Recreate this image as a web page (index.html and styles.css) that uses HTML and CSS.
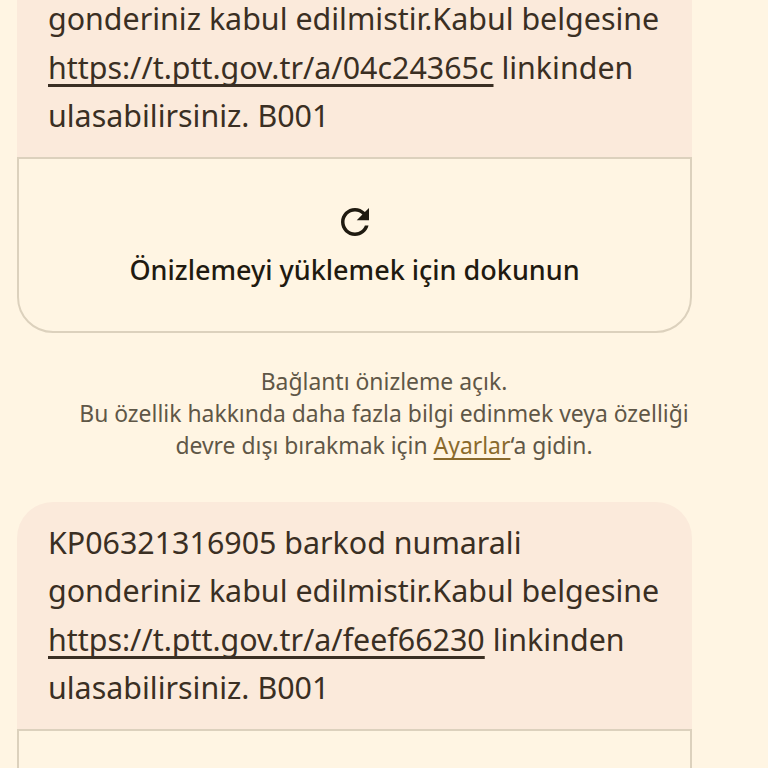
FILE: index.html
```html
<!DOCTYPE html>
<html lang="tr">
<head>
<meta charset="utf-8">
<title>Mesajlar</title>
<link rel="stylesheet" href="styles.css">
</head>
<body>
<main class="thread">
  <article class="message message--cut">
    <div class="bubble">
      <p class="text">gonderiniz kabul edilmistir.Kabul belgesine<br><a href="#">https://t.ptt.gov.tr/a/04c24365c</a> linkinden<br>ulasabilirsiniz. B001</p>
    </div>
    <button class="preview">
      <svg class="preview-icon" viewBox="0 0 24 24" aria-hidden="true"><path d="M17.65 6.35C16.2 4.9 14.21 4 12 4c-4.42 0-7.99 3.58-7.99 8s3.57 8 7.99 8c3.73 0 6.84-2.55 7.73-6h-2.08c-.82 2.33-3.04 4-5.65 4-3.31 0-6-2.69-6-6s2.69-6 6-6c1.66 0 3.14.69 4.22 1.78L13 11h7V4l-2.35 2.35z"/></svg>
      <span class="preview-label">Önizlemeyi yüklemek için dokunun</span>
    </button>
  </article>
  <p class="notice">Bağlantı önizleme açık.<br>Bu özellik hakkında daha fazla bilgi edinmek veya özelliği<br>devre dışı bırakmak için <a href="#">Ayarlar</a>‘a gidin.</p>
  <article class="message">
    <div class="bubble">
      <p class="text">KP06321316905 barkod numarali<br>gonderiniz kabul edilmistir.Kabul belgesine<br><a href="#">https://t.ptt.gov.tr/a/feef66230</a> linkinden<br>ulasabilirsiniz. B001</p>
    </div>
    <button class="preview preview--cut"></button>
  </article>
</main>
</body>
</html>
```
FILE: styles.css
```css
html, body {
  margin: 0;
  height: 100%;
  overflow: hidden;
  background: #fff5e3;
}
.thread {
  display: flex;
  flex-direction: column;
  margin-top: -80px;
  font-family: "Noto Sans", "Roboto", sans-serif;
}
.message {
  margin: 0 76px 0 17px;
}
.bubble {
  background: #fbeadb;
  border-radius: 36px 36px 0 0;
  padding: 16.5px 31px 16px;
}
.message--cut .bubble {
  padding: 75px 31px 16.5px;
}
.text {
  margin: 0;
  font-size: 30.4px;
  line-height: 48.5px;
  color: #3a2f23;
  white-space: nowrap;
}
.text a {
  color: inherit;
  text-decoration: underline;
  text-decoration-thickness: 2.5px;
  text-decoration-skip-ink: none;
  text-underline-offset: 5px;
}
.preview {
  display: flex;
  flex-direction: column;
  align-items: center;
  justify-content: center;
  gap: 9px;
  box-sizing: border-box;
  width: 100%;
  height: 176px;
  margin: 0;
  padding: 0 0 2px;
  background: #fff5e3;
  border: 2px solid #dcd1bd;
  border-radius: 0 0 36px 36px;
  font: inherit;
}
.preview-icon {
  width: 42px;
  height: 42px;
  fill: #1f1a10;
}
.preview-label {
  font-size: 27px;
  line-height: 36px;
  font-weight: 500;
  color: #1f1a10;
}
.notice {
  margin: 33px 0 40px;
  font-size: 22.9px;
  line-height: 32px;
  text-align: center;
  color: #5f5747;
  white-space: nowrap;
}
.notice a {
  color: #8a6a2c;
  text-decoration: underline;
  text-decoration-skip-ink: none;
  text-underline-offset: 4px;
}
```
